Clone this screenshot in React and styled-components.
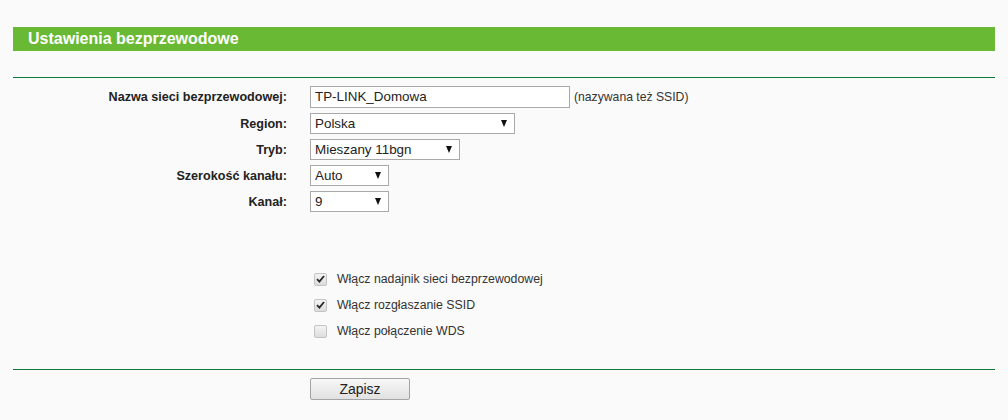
import React from "react";
import styled, { createGlobalStyle } from "styled-components";

const GlobalStyle = createGlobalStyle`
  html, body {
    margin: 0;
    padding: 0;
    background: #fafafa;
  }
  body {
    font-family: "Liberation Sans", Arial, sans-serif;
    color: #222;
  }
`;

const Page = styled.div`
  width: 982px;
  margin-left: 13px;
  padding-top: 27px;
`;

const Header = styled.div`
  height: 24px;
  background: #69b934;
  color: #fff;
  font-size: 16px;
  font-weight: bold;
  line-height: 24px;
  padding-left: 15px;
`;

const Rule = styled.div`
  height: 1px;
  background: #0b7a3a;
  margin-top: ${props => props.top}px;
`;

const Form = styled.div`
  display: grid;
  grid-template-columns: 274px auto;
  column-gap: 23px;
  row-gap: 5px;
  margin-top: 8px;
  align-items: center;
`;

const Label = styled.div`
  text-align: right;
  font-size: 12.6px;
  font-weight: bold;
  color: #222;
`;

const Field = styled.div`
  display: flex;
  align-items: center;
  gap: 4px;
`;

const TextInput = styled.div`
  box-sizing: border-box;
  width: 260px;
  height: 22px;
  border: 1px solid #a9a9a9;
  background: #fff;
  font-size: 13.4px;
  line-height: 20px;
  padding-left: 4px;
`;

const Hint = styled.span`
  font-size: 12.2px;
  color: #333;
`;

const Select = styled.div`
  box-sizing: border-box;
  width: ${props => props.width}px;
  height: 21px;
  border: 1px solid #a9a9a9;
  background: #fff;
  font-size: 13.4px;
  line-height: 19px;
  padding-left: 4px;
  display: flex;
  justify-content: space-between;
  align-items: center;
`;

const Arrow = styled.span`
  width: 0;
  height: 0;
  margin-right: 7px;
  border-left: 3.5px solid transparent;
  border-right: 3.5px solid transparent;
  border-top: 7px solid #111;
`;

const Options = styled.div`
  display: flex;
  flex-direction: column;
  gap: 12px;
  margin-top: 60px;
  margin-left: 301px;
`;

const Option = styled.label`
  display: flex;
  align-items: center;
  gap: 10px;
  font-size: 12.3px;
  color: #333;
  height: 14px;
`;

const Box = styled.span`
  box-sizing: border-box;
  width: 13px;
  height: 13px;
  border: 1px solid #c4c4c4;
  border-radius: 2px;
  background: linear-gradient(#f4f4f4, #dcdcdc);
  display: flex;
  align-items: center;
  justify-content: center;
`;

function Check() {
  return (
    <svg width="9" height="8" viewBox="0 0 9 8">
      <path d="M1 4.2 L3.4 6.6 L8 1" fill="none" stroke="#2a2a2a" strokeWidth="1.8" />
    </svg>
  );
}

const Actions = styled.div`
  margin-top: 8px;
  margin-left: 297px;
`;

const Button = styled.button`
  box-sizing: border-box;
  width: 100px;
  height: 22px;
  border: 1px solid #a3a3a3;
  border-radius: 2px;
  background: linear-gradient(#f8f8f8, #e1e1e1);
  font-family: "Liberation Sans", Arial, sans-serif;
  font-size: 14px;
  color: #222;
  padding: 0;
`;

function Dropdown({ width, value }) {
  return (
    <Select width={width}>
      <span>{value}</span>
      <Arrow />
    </Select>
  );
}

export default function App() {
  return (
    <Page>
      <GlobalStyle />
      <Header>Ustawienia bezprzewodowe</Header>
      <Rule top={26} />
      <Form>
        <Label>Nazwa sieci bezprzewodowej:</Label>
        <Field>
          <TextInput>TP-LINK_Domowa</TextInput>
          <Hint>(nazywana też SSID)</Hint>
        </Field>
        <Label>Region:</Label>
        <Field>
          <Dropdown width={205} value="Polska" />
        </Field>
        <Label>Tryb:</Label>
        <Field>
          <Dropdown width={150} value="Mieszany 11bgn" />
        </Field>
        <Label>Szerokość kanału:</Label>
        <Field>
          <Dropdown width={79} value="Auto" />
        </Field>
        <Label>Kanał:</Label>
        <Field>
          <Dropdown width={79} value="9" />
        </Field>
      </Form>
      <Options>
        <Option>
          <Box>
            <Check />
          </Box>
          Włącz nadajnik sieci bezprzewodowej
        </Option>
        <Option>
          <Box>
            <Check />
          </Box>
          Włącz rozgłaszanie SSID
        </Option>
        <Option>
          <Box />
          Włącz połączenie WDS
        </Option>
      </Options>
      <Rule top={31} />
      <Actions>
        <Button>Zapisz</Button>
      </Actions>
    </Page>
  );
}
